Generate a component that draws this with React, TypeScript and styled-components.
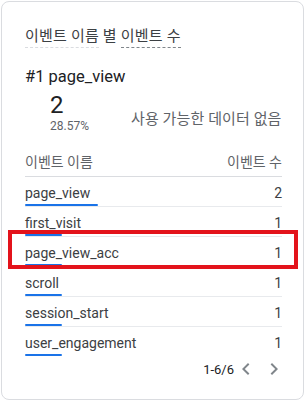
import styled, { createGlobalStyle } from 'styled-components';

const GlobalStyle = createGlobalStyle`
  html, body {
    margin: 0;
    padding: 0;
    background: #ffffff;
  }
  body {
    padding: 1px;
    font-family: Roboto, "Noto Sans CJK KR", "Noto Sans", sans-serif;
  }
`;

const rows = [
  { name: 'page_view', count: 2 },
  { name: 'first_visit', count: 1 },
  { name: 'page_view_acc', count: 1 },
  { name: 'scroll', count: 1 },
  { name: 'session_start', count: 1 },
  { name: 'user_engagement', count: 1 },
];

const maxCount = Math.max(...rows.map((r) => r.count));

export default function App() {
  return (
    <>
      <GlobalStyle />
      <Card>
        <Title>
          <Dim $dark={false}>이벤트 이름</Dim> 별 <Dim $dark>이벤트 수</Dim>
        </Title>
        <TopName>#1 page_view</TopName>
        <Summary>
          <Figures>
            <BigValue>2</BigValue>
            <Percent>28.57%</Percent>
          </Figures>
          <NoData>사용 가능한 데이터 없음</NoData>
        </Summary>
        <Table>
          <HeaderRow>
            <span>이벤트 이름</span>
            <span>이벤트 수</span>
          </HeaderRow>
          {rows.map((r, i) => (
            <Row key={r.name} $last={i === rows.length - 1}>
              <Cells>
                <span>{r.name}</span>
                <span>{r.count}</span>
              </Cells>
              <Bar style={{ width: `${(r.count / maxCount) * 73}px` }} />
            </Row>
          ))}
        </Table>
        <Pager>
          <PageLabel>1-6/6</PageLabel>
          <Chevron viewBox="0 0 24 24">
            <path d="M15.4 7.4 14 6l-6 6 6 6 1.4-1.4L10.8 12z" />
          </Chevron>
          <Chevron viewBox="0 0 24 24">
            <path d="M8.6 16.6 10 18l6-6-6-6-1.4 1.4 4.6 4.6z" />
          </Chevron>
        </Pager>
        <Highlight />
      </Card>
    </>
  );
}

const Card = styled.div`
  position: relative;
  box-sizing: border-box;
  width: 303px;
  height: 399px;
  border: 1px solid #dadce0;
  border-radius: 8px;
  background: #ffffff;
  padding: 24px 21px 0 23px;
  color: #202124;
`;

const Title = styled.div`
  font-size: 15px;
  line-height: 20px;
  color: #3c4043;
  letter-spacing: 0.2px;
`;

const Dim = styled.span<{ $dark: boolean }>`
  padding-bottom: 2px;
  border-bottom: 1px dashed ${(p) => (p.$dark ? '#80868b' : '#dadce0')};
`;

const TopName = styled.div`
  margin-top: 20px;
  font-size: 16.5px;
  line-height: 22px;
  color: #202124;
`;

const Summary = styled.div`
  display: flex;
  align-items: flex-end;
  margin-top: 4px;
`;

const Figures = styled.div`
  display: flex;
  flex-direction: column;
  padding-left: 25px;
  width: 81px;
`;

const BigValue = styled.div`
  font-size: 24px;
  line-height: 26px;
  color: #202124;
`;

const Percent = styled.div`
  font-size: 12px;
  line-height: 16px;
  color: #5f6368;
`;

const NoData = styled.div`
  font-size: 15px;
  line-height: 20px;
  color: #5f6368;
  letter-spacing: 0.1px;
  padding-bottom: 5px;
`;

const Table = styled.div`
  margin-top: 19px;
`;

const HeaderRow = styled.div`
  display: flex;
  justify-content: space-between;
  font-size: 14px;
  line-height: 18px;
  color: #5f6368;
  padding-bottom: 5px;
  border-bottom: 1px solid #dadce0;
`;

const Row = styled.div<{ $last: boolean }>`
  display: flex;
  flex-direction: column;
  height: 30px;
  box-sizing: border-box;
  border-bottom: 1px solid ${(p) => (p.$last ? 'transparent' : '#e8eaed')};
`;

const Cells = styled.div`
  display: flex;
  justify-content: space-between;
  font-size: 14px;
  line-height: 20px;
  color: #3c4043;
  padding-top: 6px;
`;

const Bar = styled.div`
  height: 2px;
  margin-top: auto;
  background: #1a73e8;
  border-radius: 1px;
`;

const Pager = styled.div`
  display: flex;
  justify-content: flex-end;
  align-items: center;
  gap: 4px;
  margin-top: 0;
  margin-right: -4px;
  color: #202124;
`;

const PageLabel = styled.span`
  font-size: 13px;
  margin-right: -4px;
`;

const Chevron = styled.svg`
  width: 24px;
  height: 24px;
  fill: #80868b;
`;

const Highlight = styled.div`
  position: absolute;
  left: 6px;
  top: 228px;
  width: 290px;
  height: 39px;
  box-sizing: border-box;
  border: 4px solid #e3131b;
  pointer-events: none;
`;
